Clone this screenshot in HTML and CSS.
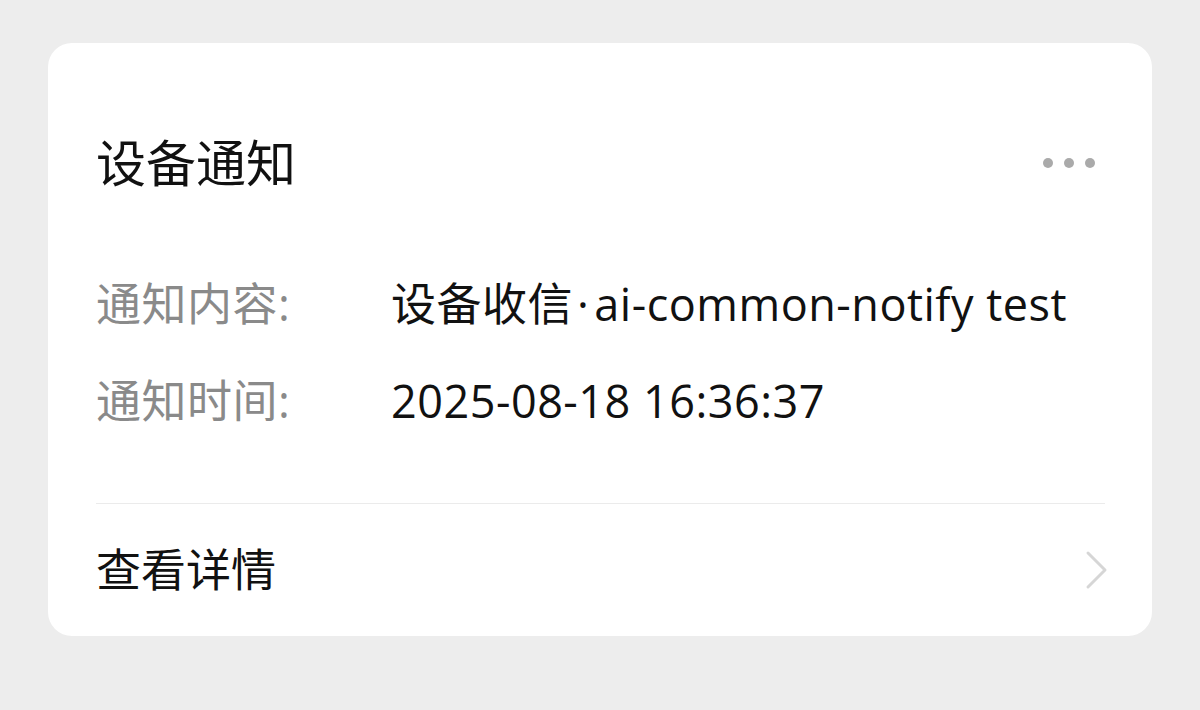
FILE: index.html
```html
<!DOCTYPE html>
<html lang="zh-CN">
<head>
<meta charset="utf-8">
<title>设备通知</title>
<link rel="stylesheet" href="styles.css">
</head>
<body>
<div class="card">
  <div class="header">
    <div class="title">设备通知</div>
    <div class="more" aria-label="更多"><span></span><span></span><span></span></div>
  </div>
  <div class="info">
    <div class="label">通知内容:</div>
    <div class="value">设备收信<span class="sep">·</span>ai-common-notify test</div>
    <div class="label">通知时间:</div>
    <div class="value">2025-08-18 16:36:37</div>
  </div>
  <div class="divider"></div>
  <div class="footer">
    <div class="link">查看详情</div>
    <svg class="chevron" width="24" height="40" viewBox="0 0 24 40"><polyline points="3,3 20,20 3,37" fill="none" stroke="#d6d6d6" stroke-width="3" stroke-linecap="round" stroke-linejoin="round"/></svg>
  </div>
</div>
</body>
</html>
```
FILE: styles.css
```css
html, body {
  margin: 0;
  padding: 0;
}
body {
  background: #ededed;
  padding: 43px 0 0 48px;
  font-family: "Open Sans", "Noto Sans CJK SC", sans-serif;
  color: #111;
}
.card {
  width: 1104px;
  height: 593px;
  box-sizing: border-box;
  background: #fff;
  border-radius: 24px;
  padding: 90px 47px 0 48px;
}
.header {
  display: flex;
  align-items: center;
  justify-content: space-between;
  height: 60px;
}
.title {
  font-size: 50px;
  line-height: 60px;
  color: #111;
}
.more {
  display: flex;
  gap: 11px;
  margin-right: 10px;
}
.more span {
  width: 10px;
  height: 10px;
  border-radius: 50%;
  background: #aaa;
}
.info {
  display: grid;
  grid-template-columns: 295px 1fr;
  row-gap: 37px;
  margin-top: 81px;
  font-size: 45px;
  line-height: 60px;
  letter-spacing: 0.5px;
}
.label {
  color: #8a8a8a;
}
.value {
  color: #111;
}
.sep {
  padding: 0 5px 0 4px;
}
.divider {
  height: 1px;
  background: #ebebeb;
  margin-top: 72px;
}
.footer {
  display: flex;
  align-items: center;
  justify-content: space-between;
  margin-top: 36px;
  height: 60px;
}
.link {
  font-size: 45px;
  line-height: 60px;
  color: #111;
}
.chevron {
  display: block;
  margin-right: -4px;
}
```
